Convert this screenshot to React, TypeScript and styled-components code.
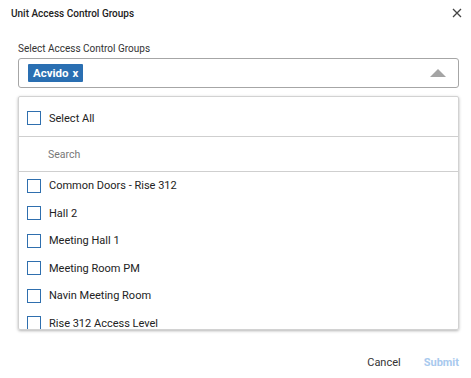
import React from "react";
import styled, { createGlobalStyle } from "styled-components";

const Global = createGlobalStyle`
  html, body { margin: 0; padding: 0; background: #fff; }
  body { font-family: Roboto, "Liberation Sans", Arial, sans-serif; color: #212121; }
  * { box-sizing: border-box; }
`;

const Dialog = styled.div`
  width: 471px;
  height: 378px;
  display: flex;
  flex-direction: column;
  background: #fff;
`;

const Header = styled.div`
  display: flex;
  align-items: center;
  justify-content: space-between;
  height: 26px;
  padding: 0 9px 0 11px;
`;

const Title = styled.div`
  font-size: 10px;
  font-weight: 500;
  color: #222;
`;

const CloseButton = styled.button`
  border: 0;
  background: none;
  padding: 0;
  width: 10px;
  height: 10px;
  display: flex;
  align-items: center;
  justify-content: center;
  cursor: pointer;
`;

const Body = styled.div`
  padding: 16px 12px 0 18px;
  display: flex;
  flex-direction: column;
`;

const Label = styled.div`
  font-size: 10px;
  color: #333;
  line-height: 14px;
  margin-bottom: 2px;
`;

const SelectBox = styled.div`
  height: 30px;
  border: 1px solid #a6a6a6;
  border-radius: 3px;
  display: flex;
  align-items: center;
  justify-content: space-between;
  padding: 0 12px 0 9px;
`;

const Chip = styled.span`
  background: #2a6fb2;
  color: #fff;
  font-weight: 700;
  font-size: 11.5px;
  height: 18px;
  line-height: 18px;
  padding: 0 5px;
  border-radius: 1px;
  word-spacing: 1px;
`;

const Triangle = styled.span`
  width: 0;
  height: 0;
  border-left: 8px solid transparent;
  border-right: 8px solid transparent;
  border-bottom: 8px solid #a4a4a4;
`;

const Panel = styled.div`
  margin-top: 8px;
  height: 234px;
  border: 1px solid #d2d2d2;
  border-radius: 2px;
  box-shadow: 0 1px 3px rgba(0, 0, 0, 0.3);
  overflow: hidden;
  display: flex;
  flex-direction: column;
`;

const Row = styled.label<{ $height: number; $border?: boolean }>`
  display: flex;
  align-items: center;
  gap: 8px;
  height: ${(p) => p.$height}px;
  padding: ${(p) => (p.$border ? "3px 0 0 8px" : "0 0 0 8px")};
  flex-shrink: 0;
  font-size: 11px;
  color: #222;
  border-bottom: ${(p) => (p.$border ? "1px solid #cfcfcf" : "none")};
`;

const Box = styled.span`
  width: 14px;
  height: 14px;
  border: 1.5px solid #2f6fae;
  flex-shrink: 0;
`;

const SearchRow = styled.div`
  height: 35px;
  flex-shrink: 0;
  display: flex;
  align-items: center;
  padding-left: 29px;
  border-bottom: 1px solid #cfcfcf;
  font-size: 10.5px;
  color: #777;
`;

const Footer = styled.div`
  margin-top: auto;
  height: 48px;
  display: flex;
  align-items: center;
  justify-content: flex-end;
  gap: 23px;
  padding: 16px 12px 0 0;
`;

const FooterButton = styled.button<{ $primary?: boolean }>`
  border: 0;
  background: none;
  padding: 0;
  font-family: inherit;
  font-size: 11px;
  font-weight: ${(p) => (p.$primary ? 700 : 400)};
  color: ${(p) => (p.$primary ? "#a8c9ee" : "#333")};
`;

const items = [
  "Common Doors - Rise 312",
  "Hall 2",
  "Meeting Hall 1",
  "Meeting Room PM",
  "Navin Meeting Room",
  "Rise 312 Access Level",
];

export default function App() {
  return (
    <>
      <Global />
      <Dialog>
        <Header>
          <Title>Unit Access Control Groups</Title>
          <CloseButton aria-label="close">
            <svg width="10" height="10" viewBox="0 0 10 10">
              <path d="M1 1L9 9M9 1L1 9" stroke="#444" strokeWidth="1.3" />
            </svg>
          </CloseButton>
        </Header>
        <Body>
          <Label>Select Access Control Groups</Label>
          <SelectBox>
            <Chip>Acvido x</Chip>
            <Triangle />
          </SelectBox>
          <Panel>
            <Row $height={40} $border>
              <Box />
              Select All
            </Row>
            <SearchRow>Search</SearchRow>
            {items.map((it) => (
              <Row key={it} $height={27.5}>
                <Box />
                {it}
              </Row>
            ))}
          </Panel>
        </Body>
        <Footer>
          <FooterButton>Cancel</FooterButton>
          <FooterButton $primary>Submit</FooterButton>
        </Footer>
      </Dialog>
    </>
  );
}
